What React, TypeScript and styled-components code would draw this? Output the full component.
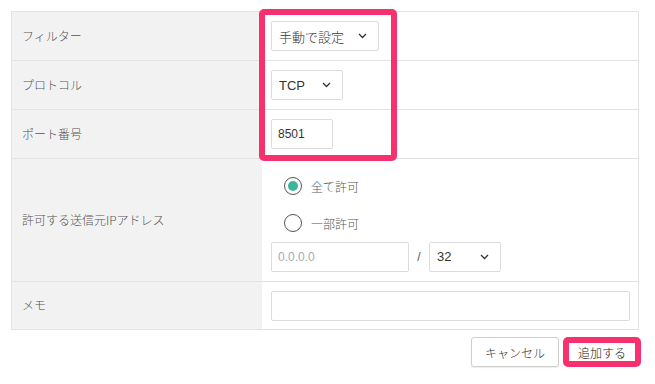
import React from 'react'
import { styled, createGlobalStyle } from 'styled-components'

const GlobalStyle = createGlobalStyle`
  body {
    margin: 0;
    background: #ffffff;
    font-family: "Liberation Sans", "Noto Sans CJK JP", sans-serif;
    color: #333;
  }
`

const Chevron = () => (
  <svg width="9" height="6" viewBox="0 0 9 6">
    <path d="M1 1 L4.5 4.5 L8 1" fill="none" stroke="#333" strokeWidth="1.3" />
  </svg>
)

const App = () => {
  return (
    <Page>
      <GlobalStyle />
      <Table>
        <Row h={48} first>
          <Label>フィルター</Label>
          <Value>
            <Select w={108}>
              <span>手動で設定</span>
              <Chevron />
            </Select>
          </Value>
        </Row>
        <Row h={48}>
          <Label>プロトコル</Label>
          <Value>
            <Select w={72}>
              <span>TCP</span>
              <Chevron />
            </Select>
          </Value>
        </Row>
        <Row h={48}>
          <Label>ポート番号</Label>
          <Value>
            <Input w={62}>8501</Input>
          </Value>
        </Row>
        <Row h={122}>
          <Label>許可する送信元IPアドレス</Label>
          <Value column>
            <RadioList>
              <RadioItem>
                <Radio checked />
                <span>全て許可</span>
              </RadioItem>
              <RadioItem>
                <Radio />
                <span>一部許可</span>
              </RadioItem>
            </RadioList>
            <IpRow>
              <Input w={138} placeholder>0.0.0.0</Input>
              <Slash>/</Slash>
              <Select w={72}>
                <span>32</span>
                <Chevron />
              </Select>
            </IpRow>
          </Value>
        </Row>
        <Row h={47}>
          <Label>メモ</Label>
          <Value>
            <Input w={359} />
          </Value>
        </Row>
        <Highlight />
      </Table>
      <Actions>
        <CancelButton>キャンセル</CancelButton>
        <SubmitButton>追加する</SubmitButton>
      </Actions>
    </Page>
  )
}

export default App

const Page = styled.div`
width: 655px;
height: 384px;
padding: 11px 0 0 11px;
box-sizing: border-box;
`
const Table = styled.div`
position: relative;
width: 628px;
box-sizing: border-box;
border: 1px solid #e3e3e3;
`
const Row = styled.div<{ h: number; first?: boolean }>`
display: grid;
grid-template-columns: 250px 1fr;
height: ${({ h }) => h}px;
border-top: ${({ first }) => (first ? '0' : '1px solid #e3e3e3')};
`
const Label = styled.div`
background: #f2f2f2;
display: flex;
align-items: center;
padding: 0 0 2px 10px;
font-size: 12px;
font-weight: 300;
color: #555;
font-family: "Noto Sans CJK JP", sans-serif;
`
const Value = styled.div<{ column?: boolean }>`
display: flex;
flex-direction: ${({ column }) => (column ? 'column' : 'row')};
align-items: ${({ column }) => (column ? 'flex-start' : 'center')};
justify-content: ${({ column }) => (column ? 'center' : 'flex-start')};
padding-left: 9px;
`
const Select = styled.div<{ w: number }>`
width: ${({ w }) => w}px;
height: 30px;
box-sizing: border-box;
border: 1px solid #dcdcdc;
border-radius: 2px;
background: #fff;
display: flex;
align-items: center;
justify-content: space-between;
padding: 0 11px 0 7px;
font-size: 13px;
font-weight: 300;
color: #333;
font-family: "Liberation Sans", "Noto Sans CJK JP", sans-serif;
`
const Input = styled.div<{ w: number; placeholder?: boolean }>`
width: ${({ w }) => w}px;
height: 30px;
box-sizing: border-box;
border: 1px solid #dcdcdc;
border-radius: 2px;
background: #fff;
display: flex;
align-items: center;
padding-left: 6px;
font-size: 12px;
color: ${({ placeholder }) => (placeholder ? '#a3abb3' : '#333')};
`
const RadioList = styled.div`
display: flex;
flex-direction: column;
padding-left: 13px;
`
const RadioItem = styled.div`
height: 37px;
display: flex;
align-items: center;
gap: 9px;
font-size: 12px;
font-weight: 300;
color: #555;
font-family: "Noto Sans CJK JP", sans-serif;
`
const Radio = styled.span<{ checked?: boolean }>`
width: 18px;
height: 18px;
box-sizing: border-box;
border-radius: 50%;
border: 1px solid #555;
display: flex;
align-items: center;
justify-content: center;
&::after {
  content: '';
  width: 10px;
  height: 10px;
  border-radius: 50%;
  background: ${({ checked }) => (checked ? '#3bb5a0' : 'transparent')};
}
`
const IpRow = styled.div`
display: flex;
align-items: center;
margin-bottom: 1px;
`
const Slash = styled.span`
width: 20px;
text-align: center;
font-size: 12px;
color: #555;
`
const Highlight = styled.div`
position: absolute;
left: 247px;
top: -3px;
width: 138px;
height: 152px;
box-sizing: border-box;
border: 6px solid #f7306e;
border-radius: 5px;
pointer-events: none;
`
const Actions = styled.div`
width: 630px;
display: flex;
justify-content: flex-end;
gap: 4px;
margin-top: 7px;
`
const CancelButton = styled.button`
width: 88px;
height: 30px;
border: 1px solid #cfcfcf;
border-radius: 3px;
background: #fff;
box-shadow: 0 1px 1px rgba(0, 0, 0, 0.08);
font-family: "Noto Sans CJK JP", sans-serif;
font-size: 12px;
font-weight: 300;
color: #333;
padding: 0;
`
const SubmitButton = styled.button`
width: 78px;
height: 30px;
box-sizing: border-box;
border: 6px solid #f7306e;
border-radius: 5px;
background: #fff;
font-family: "Noto Sans CJK JP", sans-serif;
font-size: 12px;
font-weight: 300;
color: #222;
padding: 0;
`
